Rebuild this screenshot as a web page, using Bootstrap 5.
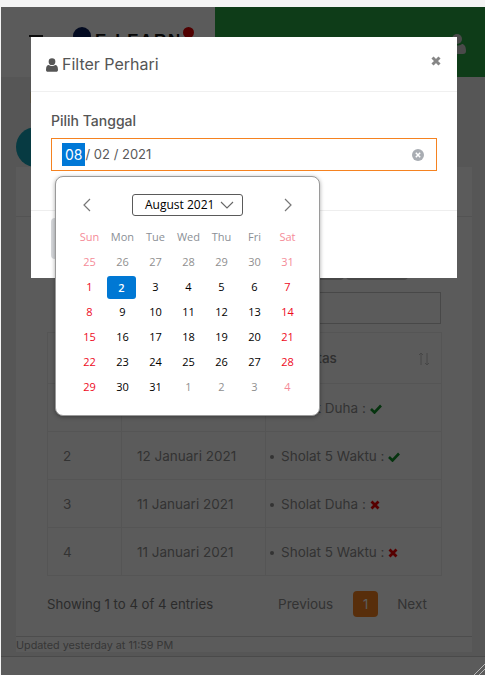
<!DOCTYPE html>
<html lang="id">
  <head>
    <meta charset="UTF-8" />
    <meta name="viewport" content="width=device-width, initial-scale=1.0" />
    <title>Filter Perhari</title>
    <link
      href="https://cdn.jsdelivr.net/npm/bootstrap@5.3.0/dist/css/bootstrap.min.css"
      rel="stylesheet"
    />
    <style>
      html,
      body {
        height: 675px;
        overflow: hidden;
      }
      body {
        background: #f4f4f4;
        font-family: Inter, "Noto Sans", sans-serif;
        color: #8f8f8f;
        font-size: 13px;
      }
      .app-shell {
        position: relative;
        margin: 7px 0 0 1px;
        height: 668px;
        background: #f1f1f1;
        overflow: hidden;
      }
      .top-head {
        height: 70px;
      }
      .head-left {
        width: 214px;
        background: #fff;
        position: relative;
      }
      .head-right {
        background: #28a745;
        padding: 27px 19px 0 0;
      }
      .burger {
        width: 14px;
        height: 2px;
        margin: 28px 0 0 28px;
        background: #222;
      }
      .logo-wrap {
        margin: 20px 0 0 30px;
        gap: 4px;
      }
      .logo-ball {
        width: 18px;
        height: 18px;
        border-radius: 50%;
        background: #0b1f5c;
      }
      .logo-text {
        font-family: "Liberation Sans", sans-serif;
        font-weight: 700;
        font-size: 17px;
        letter-spacing: 1.6px;
        color: #111;
        line-height: 18px;
        margin-top: 5px;
      }
      .logo-dot {
        position: absolute;
        left: 182px;
        top: 20px;
        width: 11px;
        height: 11px;
        border-radius: 50%;
        background: #e00000;
      }
      .title-zone {
        height: 90px;
        padding: 12px 0 0 29px;
        position: relative;
      }
      .page-title {
        font-size: 15px;
        font-weight: 600;
        color: #3a2a20;
        margin: 0;
      }
      .teal-dot {
        position: absolute;
        left: 15px;
        top: 50px;
        width: 40px;
        height: 40px;
        border-radius: 50%;
        background: #14a3b8;
      }
      .main-card {
        margin: 0 13px 0 15px;
        height: 485px;
        background: #fff;
        border: 0;
        border-radius: 0;
        --bs-card-bg: #fff;
      }
      .main-card .card-header {
        height: 50px;
        background: #fff;
        border-bottom: 1px solid #e8e8e8;
        border-radius: 0;
      }
      .main-card .card-body {
        padding: 0 31px;
        height: 419px;
        flex: none;
      }
      .tool-row {
        height: 63px;
        gap: 2px;
        padding-right: 33px;
      }
      .tool-btn {
        height: 55px;
        width: 42px;
        margin-top: 8px;
        background: #c8c8c8;
        border-radius: 4px;
      }
      .tool-btn-wide {
        width: 62px;
      }
      .search-box {
        height: 32px;
        margin: 12px 0 8px auto;
        width: 240px;
        border: 1px solid #c9c9c9;
      }
      .data-table {
        --bs-table-bg: transparent;
        --bs-table-color: #8f8f8f;
        border-color: #eeeeee;
        font-size: 13.5px;
        margin: 0;
        table-layout: fixed;
        width: 394px;
      }
      .data-table th,
      .data-table td {
        vertical-align: middle;
        height: 48px;
        padding: 1px 0 0 15px;
        font-weight: 400;
      }
      .data-table th {
        height: 51px;
        color: #858585;
        font-weight: 500;
        position: relative;
      }
      .data-table td:last-child {
        padding-left: 4px;
      }
      .data-table th:last-child {
        padding-left: 15px;
      }
      .sort-mark {
        position: absolute;
        right: 11px;
        top: 19px;
        color: #c4c4c4;
      }
      .dot-item {
        display: inline-block;
        width: 4px;
        height: 4px;
        border-radius: 50%;
        background: #8f8f8f;
        margin-right: 7px;
        vertical-align: middle;
      }
      .pager-row {
        margin-top: 15px;
        height: 26px;
      }
      .show-info {
        color: #7a7a7a;
        font-size: 13.2px;
        padding-top: 2px;
      }
      .pager-link {
        color: #8f8f8f;
        font-size: 13.5px;
        padding-top: 1px;
      }
      .pager-now {
        display: block;
        width: 25px;
        height: 26px;
        line-height: 26px;
        margin: 0 19px 0 20px;
        text-align: center;
        border-radius: 4px;
        background: #f58220;
        color: #fff;
        font-size: 13px;
      }
      .pager-next {
        margin-right: 14px;
      }
      .main-card .card-footer {
        height: 16px;
        padding: 0;
        background: #fff;
        border-top: 1px solid #d8d8d8;
        border-radius: 0;
        color: #9a9a9a;
        font-size: 10.8px;
        line-height: 17px;
        white-space: nowrap;
      }
      .foot-bar {
        position: absolute;
        left: 0;
        right: 0;
        top: 649px;
        height: 19px;
        background: #fff;
        border-top: 1px solid #cfcfcf;
      }
      .dim-layer {
        position: absolute;
        inset: 0;
        z-index: 10;
        background: rgba(0, 0, 0, 0.645);
      }
      .grip-mark {
        position: absolute;
        right: 0;
        bottom: 0;
        z-index: 11;
      }
      .filter-modal {
        position: absolute;
        z-index: 30;
        left: 30px;
        top: 30px;
        width: 426px;
        height: 241px;
        border: 0;
        border-radius: 0;
        --bs-modal-bg: #fff;
        background: #fff;
        color: #555;
      }
      .filter-modal .modal-header {
        height: 55px;
        padding: 2px 16px 0 15px;
        border-bottom: 1px solid #f0f0f0;
        border-radius: 0;
      }
      .filter-title {
        font-size: 16px;
        font-weight: 400;
        color: #555;
        margin: 0;
      }
      .x-btn {
        border: 0;
        background: none;
        padding: 0;
        margin: -8px 0 0 0;
        line-height: 0;
      }
      .filter-modal .modal-body {
        padding: 19px 20px 0;
        height: 118px;
        flex: none;
      }
      .date-label {
        font-size: 14px;
        font-weight: 500;
        color: #555;
        margin-bottom: 7px;
        line-height: 20px;
        display: block;
      }
      .date-box {
        height: 33px;
        border: 1px solid #f58220;
        padding: 0 12px 0 10px;
        color: #5a5a5a;
        font-size: 13px;
      }
      .date-sel {
        background: #0078d7;
        color: #fff;
        font-size: 14px;
        padding: 1px 2px 1px 3px;
        margin-right: 1px;
      }
      .filter-modal .modal-footer {
        height: 68px;
        padding: 7px 20px;
        border-top: 1px solid #eeeeee;
        justify-content: flex-start;
        border-radius: 0;
        display: block;
      }
      .close-pick {
        width: 90px;
        height: 41px;
        background: #d6d8db;
        border: 0;
        border-radius: 4px;
      }
      .cal-pop {
        position: absolute;
        z-index: 40;
        left: 54px;
        top: 169px;
        width: 265px;
        height: 240px;
        background: #fff;
        border: 1px solid #9a9a9a;
        border-radius: 8px;
        box-shadow: 0 1px 4px rgba(0, 0, 0, 0.35);
        font-family: "Open Sans", "Noto Sans", sans-serif;
        font-size: 11px;
        padding: 17px 0 0 16px;
      }
      .cal-head {
        width: 232px;
        height: 22px;
        padding: 0 12px 0 11px;
      }
      .month-pick {
        width: 111px;
        height: 22px;
        border: 1px solid #5a5a5a;
        border-radius: 3px;
        font-size: 12px;
        color: #000;
        padding: 0 8px 0 12px;
      }
      .cal-grid {
        display: grid;
        grid-template-columns: repeat(7, 33px);
        grid-auto-rows: 25px;
        margin: 8px 0 0 1px;
        text-align: center;
        line-height: 25px;
        color: #000;
      }
      .cal-name {
        color: #8b8f96;
      }
      .cal-faded {
        color: #8f8f8f;
      }
      .cal-off {
        color: #f58b98;
      }
      .cal-red {
        color: #ee0a1d;
      }
      .cal-on {
        background: #0078d4;
        color: #fff;
        font-weight: 600;
        border-radius: 3px;
        margin: 2px 3px 0 1px;
        line-height: 23px;
      }
    </style>
  </head>
  <body>
    <div class="app-shell">
      <div class="top-head d-flex">
        <div class="head-left d-flex flex-shrink-0">
          <div class="burger flex-shrink-0"></div>
          <div class="logo-wrap d-flex">
            <div class="logo-ball"></div>
            <div class="logo-text">E-LEARN</div>
          </div>
          <div class="logo-dot"></div>
        </div>
        <div class="head-right flex-grow-1 d-flex justify-content-end">
          <svg width="18" height="20" viewBox="0 0 18 20" fill="#cfcfcf">
            <circle cx="9" cy="5" r="5" />
            <path d="M0 17c0-5 2-7 4-7 1.500 1 3 1.500 5 1.500s3.500-.5 5-1.500c2 0 4 2 4 7 0 2-1 3-3 3H3c-2 0-3-1-3-3z" />
          </svg>
        </div>
      </div>

      <div class="title-zone">
        <h1 class="page-title">Dashboard</h1>
        <div class="teal-dot"></div>
      </div>

      <div class="card main-card">
        <div class="card-header"></div>
        <div class="card-body">
          <div class="tool-row d-flex justify-content-end">
            <div class="tool-btn"></div>
            <div class="tool-btn tool-btn-wide"></div>
          </div>
          <div class="search-box"></div>
          <table class="table table-bordered data-table">
            <colgroup>
              <col style="width: 74px" />
              <col style="width: 144px" />
              <col style="width: 176px" />
            </colgroup>
            <thead>
              <tr>
                <th></th>
                <th></th>
                <th>
                  Aktivitas
                  <svg class="sort-mark" width="12" height="14" viewBox="0 0 12 14" fill="none" stroke="currentColor" stroke-width="1">
                    <path d="M3 13V1M1 3l2-2 2 2M9 1v12M7 11l2 2 2-2" />
                  </svg>
                </th>
              </tr>
            </thead>
            <tbody>
              <tr>
                <td>1</td>
                <td>12 Januari 2021</td>
                <td>
                  <span class="dot-item"></span>Sholat Duha :
                  <svg width="12" height="10" viewBox="0 0 12 10"><path d="M1 5l3.500 3.500L11 1.500" fill="none" stroke="#12912a" stroke-width="2.600" /></svg>
                </td>
              </tr>
              <tr>
                <td>2</td>
                <td>12 Januari 2021</td>
                <td>
                  <span class="dot-item"></span>Sholat 5 Waktu :
                  <svg width="12" height="10" viewBox="0 0 12 10"><path d="M1 5l3.500 3.500L11 1.500" fill="none" stroke="#12912a" stroke-width="2.600" /></svg>
                </td>
              </tr>
              <tr>
                <td>3</td>
                <td>11 Januari 2021</td>
                <td>
                  <span class="dot-item"></span>Sholat Duha :
                  <svg width="10" height="10" viewBox="0 0 10 10"><path d="M1.500 1.500l7 7M8.500 1.500l-7 7" fill="none" stroke="#f00000" stroke-width="2.800" /></svg>
                </td>
              </tr>
              <tr>
                <td>4</td>
                <td>11 Januari 2021</td>
                <td>
                  <span class="dot-item"></span>Sholat 5 Waktu :
                  <svg width="10" height="10" viewBox="0 0 10 10"><path d="M1.500 1.500l7 7M8.500 1.500l-7 7" fill="none" stroke="#f00000" stroke-width="2.800" /></svg>
                </td>
              </tr>
            </tbody>
          </table>
          <div class="pager-row d-flex align-items-center">
            <div class="show-info me-auto">Showing 1 to 4 of 4 entries</div>
            <span class="pager-link">Previous</span>
            <span class="pager-now">1</span>
            <span class="pager-link pager-next">Next</span>
          </div>
        </div>
        <div class="card-footer">Updated yesterday at 11:59 PM</div>
      </div>
      <div class="foot-bar"></div>
      <div class="dim-layer"></div>
      <svg class="grip-mark" width="12" height="12" viewBox="0 0 12 12" fill="none" stroke="#b5b5b5">
        <path d="M12 1L1 12M12 6l-6 6" />
      </svg>

      <div class="modal-content filter-modal">
        <div class="modal-header">
          <h5 class="filter-title d-flex align-items-center gap-1">
            <svg width="12" height="14" viewBox="0 0 18 20" fill="#555">
              <circle cx="9" cy="5" r="5" />
              <path d="M0 17c0-5 2-7 4-7 1.500 1 3 1.500 5 1.500s3.500-.5 5-1.500c2 0 4 2 4 7 0 2-1 3-3 3H3c-2 0-3-1-3-3z" />
            </svg>
            Filter Perhari
          </h5>
          <button type="button" class="x-btn ms-auto">
            <svg width="10" height="10" viewBox="0 0 10 10"><path d="M1.500 1.500l7 7M8.500 1.500l-7 7" fill="none" stroke="#868686" stroke-width="3" /></svg>
          </button>
        </div>
        <div class="modal-body">
          <label class="date-label">Pilih Tanggal</label>
          <div class="date-box d-flex align-items-center">
            <span class="date-sel">08</span><span>/ 02 / 2021</span>
            <svg class="ms-auto" width="12" height="12" viewBox="0 0 12 12">
              <circle cx="6" cy="6" r="6" fill="#a9adb3" />
              <path d="M3.800 3.800l4.400 4.400M8.200 3.800L3.800 8.200" stroke="#fff" stroke-width="1.500" />
            </svg>
          </div>
        </div>
        <div class="modal-footer">
          <button type="button" class="close-pick"></button>
        </div>
      </div>

      <div class="cal-pop">
        <div class="cal-head d-flex align-items-center justify-content-between">
          <svg width="8" height="14" viewBox="0 0 8 14" fill="none" stroke="#777" stroke-width="1.200"><path d="M7 1L1 7l6 6" /></svg>
          <div class="month-pick d-flex align-items-center justify-content-between">
            August 2021
            <svg width="14" height="8" viewBox="0 0 14 8" fill="none" stroke="#666" stroke-width="1.100"><path d="M1 1l6 6 6-6" /></svg>
          </div>
          <svg width="8" height="14" viewBox="0 0 8 14" fill="none" stroke="#777" stroke-width="1.200"><path d="M1 1l6 6-6 6" /></svg>
        </div>
        <div class="cal-grid" id="cal-grid"></div>
      </div>
    </div>

    <script>
      const grid = document.getElementById("cal-grid");
      const names = ["Sun", "Mon", "Tue", "Wed", "Thu", "Fri", "Sat"];
      const days = [25, 26, 27, 28, 29, 30, 31];
      for (let d = 1; d <= 31; d++) days.push(d);
      days.push(1, 2, 3, 4);

      names.forEach((n, i) => {
        const cell = document.createElement("div");
        cell.textContent = n;
        cell.className = i === 0 || i === 6 ? "cal-off" : "cal-name";
        grid.appendChild(cell);
      });

      days.forEach((d, i) => {
        const cell = document.createElement("div");
        const weekend = i % 7 === 0 || i % 7 === 6;
        const outside = i < 7 || i >= 38;
        cell.textContent = d;
        if (outside) cell.className = weekend ? "cal-off" : "cal-faded";
        else if (weekend) cell.className = "cal-red";
        if (i === 8) cell.className = "cal-on";
        grid.appendChild(cell);
      });
    </script>
    <script src="https://cdn.jsdelivr.net/npm/bootstrap@5.3.0/dist/js/bootstrap.bundle.min.js"></script>
  </body>
</html>
